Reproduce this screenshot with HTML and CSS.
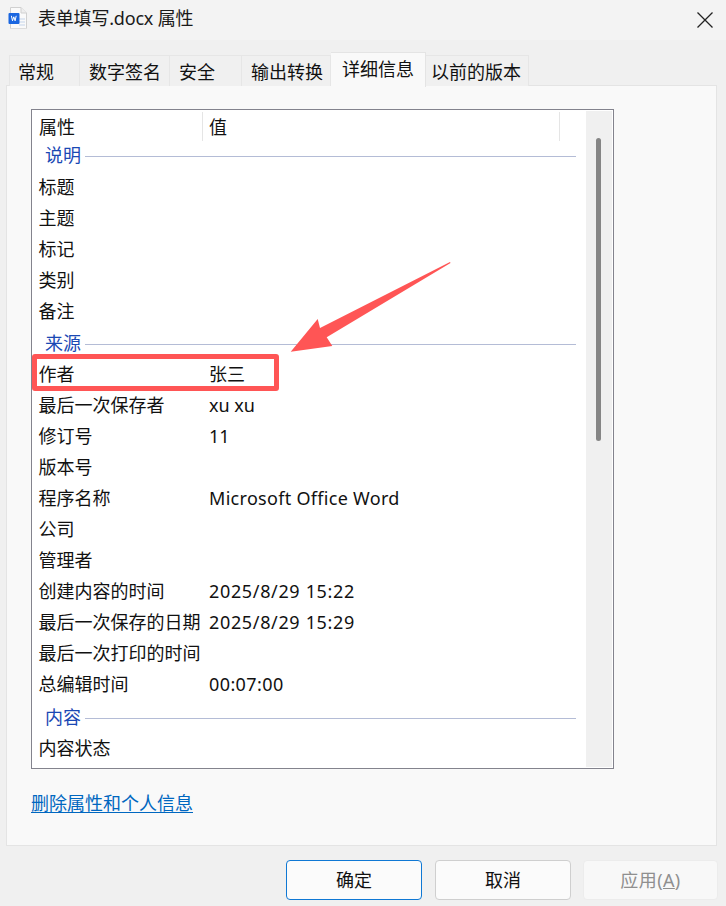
FILE: index.html
```html
<!DOCTYPE html>
<html lang="zh-CN">
<head>
<meta charset="utf-8">
<title>表单填写.docx 属性</title>
<link rel="stylesheet" href="styles.css">
</head>
<body>
<div class="dialog">
  <header class="titlebar">
    <svg class="file-icon" width="20" height="22" viewBox="0 0 20 22">
      <path d="M2.5 .5H13L18.5 6V21a.8.8 0 0 1-.8.8H3.3a.8.8 0 0 1-.8-.8Z" fill="#fafafa" stroke="#d0d0d0"/>
      <path d="M13 .5V6H18.5" fill="#eeeeee" stroke="#d0d0d0"/>
      <path d="M11 12h6M11 15h6M11 18h6" stroke="#c4d4ea"/>
      <rect x="0.5" y="6" width="11" height="11" rx="1" fill="#1a66e0"/>
      <path d="M2.6 8.8l1.1 5 1.3-4 1.3 4 1.1-5" transform="translate(.8 0)" fill="none" stroke="#fff" stroke-width="1"/>
    </svg>
    <span class="title">表单填写.docx 属性</span>
    <svg class="close" width="16" height="16" viewBox="0 0 16 16"><path d="M.5.5l15 15M15.5.5l-15 15" stroke="#222" stroke-width="1.3" fill="none"/></svg>
  </header>
  <nav class="tabs">
    <div class="tab w71">常规</div>
    <div class="tab w90">数字签名</div>
    <div class="tab w72">安全</div>
    <div class="tab w89">输出转换</div>
    <div class="tab active">详细信息</div>
    <div class="tab w104">以前的版本</div>
  </nav>
  <main class="panel">
    <div class="listbox">
      <div class="list">
        <div class="head"><div class="hc1">属性</div><div class="hc2">值</div></div>
        <div class="group first"><span>说明</span><i></i></div>
        <div class="row"><div class="k">标题</div></div>
        <div class="row"><div class="k">主题</div></div>
        <div class="row"><div class="k">标记</div></div>
        <div class="row"><div class="k">类别</div></div>
        <div class="row"><div class="k">备注</div></div>
        <div class="group"><span>来源</span><i></i></div>
        <div class="row"><div class="k">作者</div><div class="v">张三</div></div>
        <div class="row"><div class="k">最后一次保存者</div><div class="v">xu xu</div></div>
        <div class="row"><div class="k">修订号</div><div class="v">11</div></div>
        <div class="row"><div class="k">版本号</div></div>
        <div class="row"><div class="k">程序名称</div><div class="v wide">Microsoft Office Word</div></div>
        <div class="row"><div class="k">公司</div></div>
        <div class="row"><div class="k">管理者</div></div>
        <div class="row"><div class="k">创建内容的时间</div><div class="v date">2025/8/29 15:22</div></div>
        <div class="row"><div class="k">最后一次保存的日期</div><div class="v date">2025/8/29 15:29</div></div>
        <div class="row"><div class="k">最后一次打印的时间</div></div>
        <div class="row"><div class="k">总编辑时间</div><div class="v time">00:07:00</div></div>
        <div class="group last"><span>内容</span><i></i></div>
        <div class="row"><div class="k">内容状态</div></div>
      </div>
      <div class="scrollbar"><div class="thumb"></div></div>
    </div>
    <a class="link" href="#">删除属性和个人信息</a>
  </main>
  <footer class="buttons">
    <button class="btn primary">确定</button>
    <button class="btn">取消</button>
    <button class="btn disabled">应用(<u>A</u>)</button>
  </footer>
  <div class="highlight"></div>
  <svg class="arrow" width="170" height="100" viewBox="0 0 170 100">
    <path d="M.7 90.7 L27.7 58 L30 67 L160 1 L160.5 2 L36.7 76.3 L42.3 85 Z" fill="#ff5555"/>
  </svg>
</div>
</body>
</html>
```
FILE: styles.css
```css
* { box-sizing: border-box; }
html, body { margin: 0; padding: 0; }
body {
  width: 726px;
  height: 906px;
  overflow: hidden;
  background: #f0f0f0;
  font-family: "Noto Sans", "Noto Sans CJK SC", sans-serif;
  font-size: 18px;
  color: #111;
}
.dialog { position: relative; width: 726px; height: 906px; }

.titlebar {
  height: 40px;
  background: #f3f3f3;
  display: flex;
  align-items: center;
  padding: 0 0 4px 8px;
}
.file-icon { flex: none; }
.title { margin-left: 10px; line-height: 24px; color: #1a1a1a; letter-spacing: -.2px; }
.close { margin-left: auto; margin-right: 13px; margin-top: 3px; }

.tabs {
  display: flex;
  align-items: flex-end;
  height: 46px;
  padding-left: 9px;
}
.tab {
  height: 31px;
  border: 1px solid #e6e6e6;
  border-bottom: none;
  border-left-width: 0;
  background: #f0f0f0;
  padding-left: 9px;
  line-height: 33px;
  white-space: nowrap;
}
.tab:first-child { border-left-width: 1px; padding-left: 8px; }
.w71 { width: 71px; }
.w90 { width: 90px; }
.w72 { width: 72px; }
.w89 { width: 89px; }
.w104 { width: 103px; padding-left: 5px; }
.tab.active {
  width: 95px;
  height: 35px;
  background: #f9f9f9;
  border-color: #e4e4e4;
  line-height: 33px;
  margin-bottom: -1px;
  position: relative;
  z-index: 1;
  padding-left: 11px;
}

.panel {
  margin: -1px 0 0 6px;
  width: 711px;
  height: 761px;
  background: #f9f9f9;
  border: 1px solid #e4e4e4;
  padding: 23px 0 0 24px;
}
.listbox {
  width: 583px;
  height: 660px;
  background: #fff;
  border: 1px solid #83838d;
  display: flex;
}
.list { flex: 1; min-width: 0; overflow: hidden; padding-top: 2px; }

.head { display: flex; height: 29px; line-height: 30px; }
.hc1 { width: 171px; padding-left: 7px; border-right: 1px solid #e5e5e5; }
.hc2 { width: 357px; padding-left: 6px; border-right: 1px solid #e5e5e5; }

.group {
  display: flex;
  align-items: center;
  height: 32px;
  padding: 2px 0 0 13px;
  color: #1a48b4;
}
.group.first { height: 31px; padding-top: 0; }
.group.last { height: 33px; padding-top: 4px; }
.group span { line-height: 30px; margin-bottom: 3px; }
.group i {
  display: block;
  width: 491px;
  margin-left: 4px;
  height: 1px;
  background: #b4bcd6;
}
.row { display: flex; height: 31px; line-height: 31px; }
.k { width: 170px; padding-left: 6.5px; white-space: nowrap; flex: none; }
.v { padding-left: 7px; white-space: nowrap; }
.wide { letter-spacing: .3px; }
.date { letter-spacing: .65px; }
.time { letter-spacing: .4px; }

.scrollbar {
  flex: none;
  width: 26px;
  margin: 1px 1px 1px 0;
  background: #f0f0f0;
  position: relative;
}
.thumb {
  position: absolute;
  left: 10px;
  top: 27px;
  width: 5px;
  height: 303px;
  border-radius: 3px;
  background: #858585;
}

.link {
  display: inline-block;
  margin-top: 21px;
  line-height: 26px;
  color: #0067c0;
  text-decoration: underline;
  text-underline-offset: 2px;
  text-decoration-thickness: 1px;
}

.buttons {
  display: flex;
  padding: 14px 0 0 286px;
  gap: 13px;
}
.btn {
  width: 136px;
  height: 40px;
  font: inherit;
  color: #111;
  background: #fbfbfb;
  border: 1px solid #cfcfcf;
  border-radius: 4px;
  padding: 0 0 2px;
}
.btn.primary { border-color: #0f78d4; }
.btn.disabled { width: 135px; color: #8f8f8f; background: #f8f8f8; border-color: #ececec; margin-left: -1px; letter-spacing: .4px; }

.highlight {
  position: absolute;
  left: 32px;
  top: 354px;
  width: 247px;
  height: 37px;
  border: 5px solid #ff5555;
  border-radius: 3px;
}
.arrow { position: absolute; left: 290px; top: 261px; }
```
